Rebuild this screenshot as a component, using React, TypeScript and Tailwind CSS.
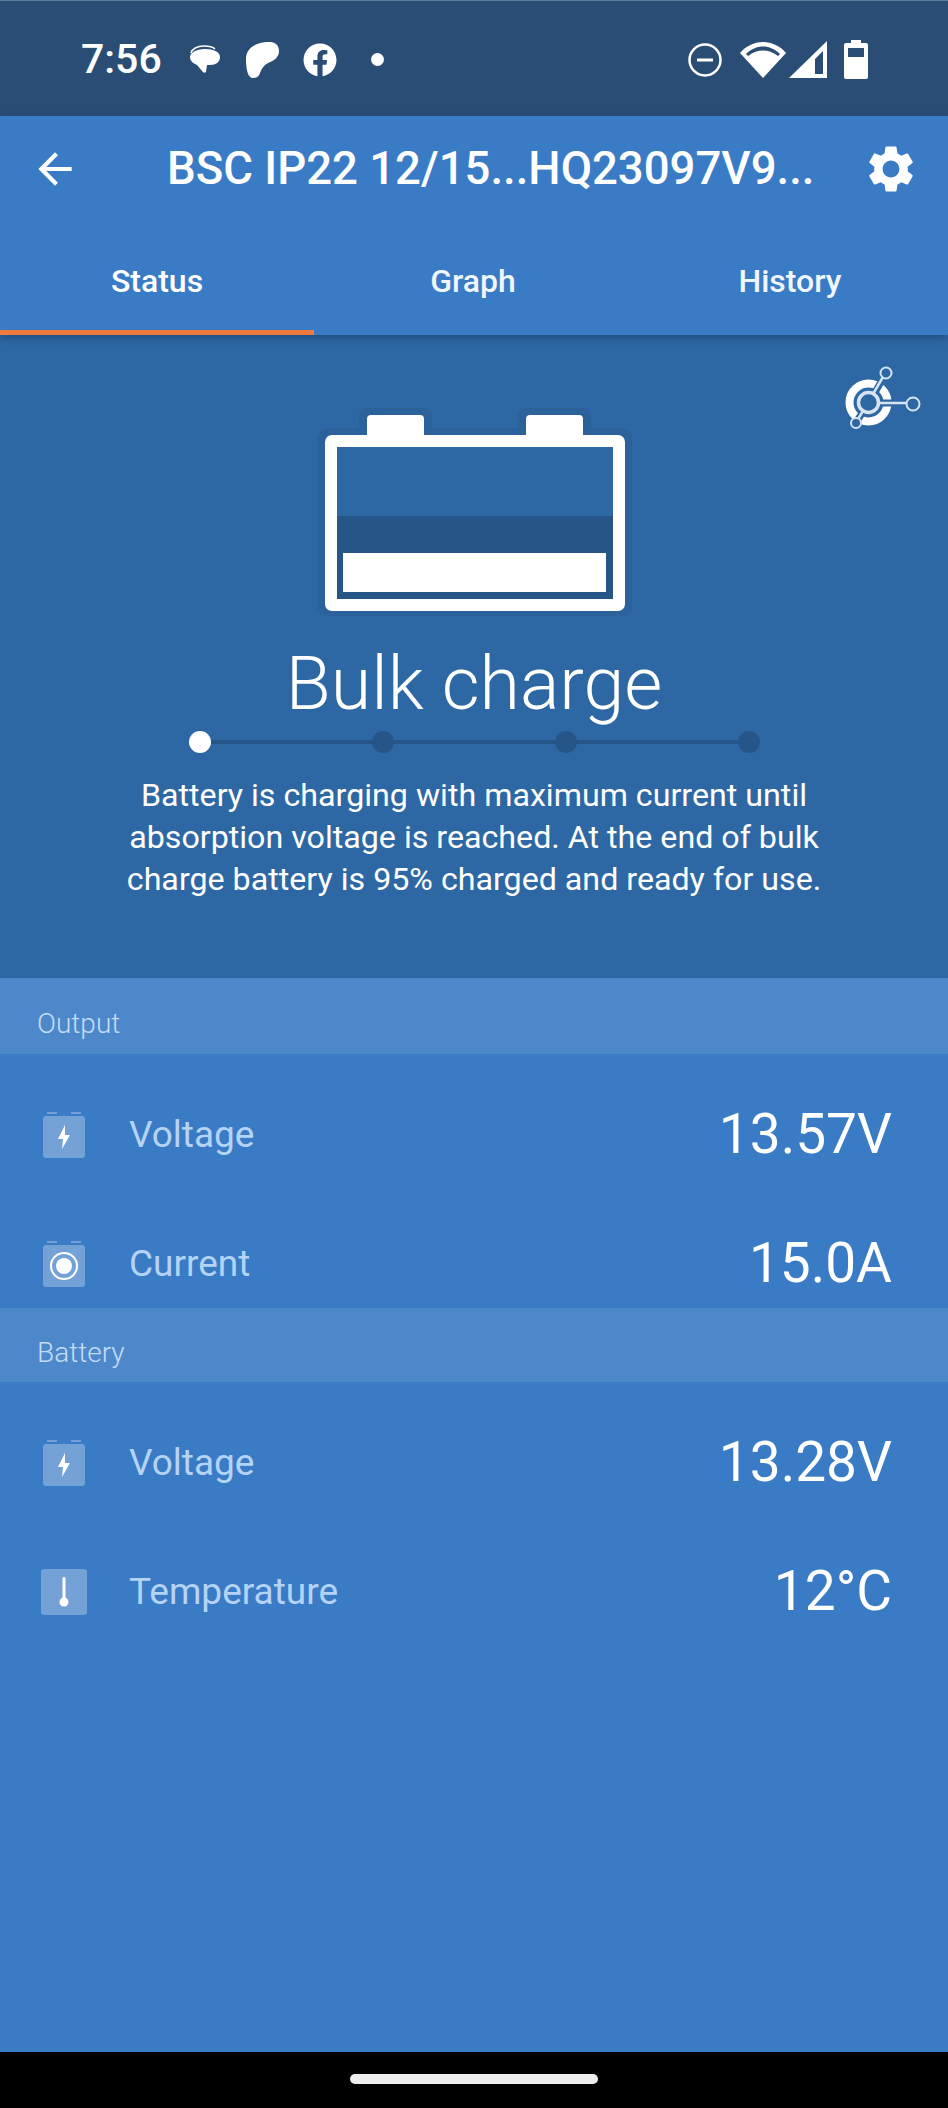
import { MdArrowBack, MdSettings } from 'react-icons/md'
import { FaFacebook } from 'react-icons/fa'

const font = { fontFamily: 'Roboto, sans-serif' }

function Bubble() {
  return (
    <svg width="34" height="32" viewBox="0 0 34 32" className="text-white">
      <path d="M3 9c1-4 6-7 13-7 5 0 9 1 11 3" fill="none" stroke="currentColor" strokeWidth="1.5" />
      <path d="M2 13c0-4 6-8 15-8s15 3 15 8c0 5-4 8-10 8-1 0-2 0-3 0l-1 7c-1 1-2 1-3 0l-6-7c-4-2-7-4-7-8z" fill="currentColor" />
    </svg>
  )
}

function Blob() {
  return (
    <svg width="34" height="36" viewBox="0 0 34 36" className="text-white">
      <path d="M1 17C1 7 9 1 21 0c9-1 13 3 13 9 0 7-6 10-11 12-4 2-6 5-8 10-1 3-3 5-7 5-5 0-7-8-7-19z" fill="currentColor" />
    </svg>
  )
}

function Dnd() {
  return (
    <svg width="34" height="34" viewBox="0 0 34 34">
      <circle cx="17" cy="17" r="15.5" fill="none" stroke="white" strokeWidth="2.5" />
      <rect x="9" y="15.5" width="16" height="3" fill="white" />
    </svg>
  )
}

function Wifi() {
  return (
    <svg width="46" height="38" viewBox="0 0 46 38">
      <path d="M0 12C6 5 14 1 23 1s17 4 23 11L23 37z" fill="white" />
      <path d="M6 13C11 8 17 5.500 23 5.500S35 8 40 13l-2 2C33 11 28 9.500 23 9.500S13 11 8 15z" fill="#2a4d76" />
    </svg>
  )
}

function Signal() {
  return (
    <svg width="38" height="37" viewBox="0 0 38 37">
      <path d="M0 37L38 0v37z" fill="white" />
      <path d="M26 18L34 10v23H26z" fill="#2a4d76" />
    </svg>
  )
}

function PhoneBattery() {
  return (
    <svg width="24" height="39" viewBox="0 0 24 39">
      <path d="M7 0h10v3h5a2 2 0 0 1 2 2v32a2 2 0 0 1-2 2H2a2 2 0 0 1-2-2V5a2 2 0 0 1 2-2h5z" fill="white" />
      <rect x="4" y="8" width="16" height="9" fill="#2a4d76" />
    </svg>
  )
}

function NetworkIcon() {
  return (
    <svg width="76" height="68" viewBox="0 0 76 68" className="absolute right-[27px] top-[31px]">
      <g transform="translate(-845 -367)">
        <circle cx="868.500" cy="403.500" r="19" fill="none" stroke="white" strokeWidth="8" />
        <path d="M870 402l15-26M870 404h38M866 408l-9 14" stroke="#2e68a4" strokeWidth="7" fill="none" />
        <circle cx="868.500" cy="403.500" r="10" fill="#2e68a4" stroke="#d5e3f2" strokeWidth="3.500" />
        <path d="M873 395l10-17M879 404h27M863 412l-5 8" stroke="#d5e3f2" strokeWidth="2.500" fill="none" />
        <circle cx="886" cy="374" r="5.500" fill="#2e68a4" stroke="#d5e3f2" strokeWidth="2" />
        <circle cx="913" cy="405" r="6.500" fill="#2e68a4" stroke="#d5e3f2" strokeWidth="2" />
        <circle cx="856" cy="424" r="5" fill="#2e68a4" stroke="#d5e3f2" strokeWidth="2" />
      </g>
    </svg>
  )
}

function BigBattery() {
  return (
    <svg width="316" height="212" viewBox="0 0 316 212" className="block">
      <rect x="1" y="24" width="316" height="188" rx="12" fill="#2b629c" />
      <rect x="43" y="4" width="73" height="40" rx="8" fill="#2b629c" />
      <rect x="202" y="4" width="73" height="40" rx="8" fill="#2b629c" />
      <rect x="51" y="11" width="57" height="30" rx="4" fill="white" />
      <rect x="210" y="11" width="57" height="30" rx="4" fill="white" />
      <rect x="9" y="31" width="300" height="176" rx="7" fill="white" />
      <rect x="21" y="43" width="276" height="152" fill="#2e68a4" />
      <rect x="21" y="112" width="276" height="83" fill="#265688" />
      <rect x="27" y="149" width="263" height="39" fill="white" />
    </svg>
  )
}

function Stepper() {
  return (
    <div className="relative mt-[5px] flex w-[571px] items-center justify-between">
      <div className="absolute left-[10px] right-[10px] top-[9px] h-[4px] bg-[#265688]" />
      <div className="relative h-[22px] w-[22px] rounded-full bg-white" />
      <div className="relative h-[22px] w-[22px] rounded-full bg-[#265688]" />
      <div className="relative h-[22px] w-[22px] rounded-full bg-[#265688]" />
      <div className="relative h-[22px] w-[22px] rounded-full bg-[#265688]" />
    </div>
  )
}

function PackIcon({ children }: { children: React.ReactNode }) {
  return (
    <div className="flex w-[42px] flex-col items-center">
      <div className="flex w-[34px] justify-between">
        <div className="h-[2px] w-[10px] bg-[#74a2d6]" />
        <div className="h-[2px] w-[10px] bg-[#74a2d6]" />
      </div>
      <div className="mt-[2px] flex h-[42px] w-[42px] items-center justify-center rounded-[3px] bg-[#74a2d6]">
        {children}
      </div>
    </div>
  )
}

function Bolt() {
  return (
    <svg width="14" height="24" viewBox="0 0 14 24">
      <path d="M8 0L1 14h5l-1 10 8-14H8z" fill="white" />
    </svg>
  )
}

function Target() {
  return (
    <div className="flex h-[28px] w-[28px] items-center justify-center rounded-full border-[2px] border-white">
      <div className="h-[16px] w-[16px] rounded-full bg-white" />
    </div>
  )
}

function Thermo() {
  return (
    <div className="-ml-[2px] flex h-[46px] w-[46px] items-center justify-center rounded-[3px] bg-[#74a2d6]">
      <svg width="10" height="30" viewBox="0 0 10 30">
        <rect x="3.500" y="0" width="3" height="24" rx="1.500" fill="white" />
        <circle cx="5" cy="25" r="4.500" fill="white" />
      </svg>
    </div>
  )
}

function Row({ icon, label, value }: { icon: React.ReactNode; label: string; value: string }) {
  return (
    <div className="flex h-[129px] items-center pl-[43px] pr-[56px]">
      <div className="flex w-[86px] justify-start">{icon}</div>
      <div className="flex-1 text-[37px] text-[#b4d3f5]">{label}</div>
      <div className="text-[55px] text-white">{value}</div>
    </div>
  )
}

function SectionHead({ title, tall }: { title: string; tall?: boolean }) {
  return (
    <div className={`flex items-center bg-[#4d88cb] pl-[37px] text-[28px] font-light text-[#c5dcf5] ${tall ? 'h-[76px] pt-[15px]' : 'h-[74px] pt-[15px]'}`}>
      {title}
    </div>
  )
}

export default function App() {
  return (
    <div className="flex h-[2108px] w-[948px] flex-col overflow-hidden bg-black" style={font}>
      <div className="flex h-[116px] items-center justify-between border-t border-[#5c7c9c] bg-[#2a4d76] pl-[81px] pr-[80px] pt-[2px]">
        <div className="flex items-center">
          <span className="w-[107px] text-[41px] font-medium text-white">7:56</span>
          <Bubble />
          <div className="ml-[23px]"><Blob /></div>
          <FaFacebook className="ml-[24px] text-[34px] text-white" />
          <div className="ml-[34px] h-[13px] w-[13px] rounded-full bg-white" />
        </div>
        <div className="flex items-center">
          <Dnd />
          <div className="ml-[18px]"><Wifi /></div>
          <div className="ml-[3px]"><Signal /></div>
          <div className="ml-[17px]"><PhoneBattery /></div>
        </div>
      </div>

      <div className="relative z-10 h-[219px] bg-[#3a7bc6] shadow-[0_3px_8px_rgba(20,50,90,0.5)]">
        <div className="flex h-[106px] items-center">
          <MdArrowBack className="ml-[30px] text-[50px] text-white" />
          <div className="ml-[87px] w-[696px] text-[45.5px] leading-none font-medium whitespace-nowrap text-white">
            BSC IP22 12/15...HQ23097V9...
          </div>
          <MdSettings className="text-[56px] text-white" />
        </div>
        <div className="flex h-[113px]">
          <div className="flex w-[314px] items-center justify-center border-b-[5px] border-[#ee7a3c] pt-[9px] text-[32px] font-medium text-white">
            Status
          </div>
          <div className="flex w-[318px] items-center justify-center pt-[4px] text-[32px] font-medium text-[#f0f6fc]">
            Graph
          </div>
          <div className="flex w-[316px] items-center justify-center pt-[4px] text-[32px] font-medium text-[#f0f6fc]">
            History
          </div>
        </div>
      </div>

      <div className="relative flex h-[643px] flex-col items-center bg-[#2e68a4] pt-[69px]">
        <NetworkIcon />
        <BigBattery />
        <div className="mt-[26px] text-[73.5px] leading-[84px] font-light text-white">Bulk charge</div>
        <Stepper />
        <div className="mt-[21px] w-[740px] text-center text-[32.2px] leading-[42px] text-white">
          Battery is charging with maximum current until absorption voltage is reached. At the end of bulk charge battery is 95% charged and ready for use.
        </div>
      </div>

      <SectionHead title="Output" tall />
      <div className="h-[254px] overflow-hidden bg-[#3a7bc6] pt-[16px]">
        <Row icon={<PackIcon><Bolt /></PackIcon>} label="Voltage" value="13.57V" />
        <Row icon={<PackIcon><Target /></PackIcon>} label="Current" value="15.0A" />
      </div>

      <SectionHead title="Battery" />
      <div className="h-[670px] bg-[#3a7bc6] pt-[16px]">
        <Row icon={<PackIcon><Bolt /></PackIcon>} label="Voltage" value="13.28V" />
        <Row icon={<Thermo />} label="Temperature" value="12°C" />
      </div>

      <div className="flex flex-1 items-center justify-center pb-[2px]">
        <div className="h-[10px] w-[248px] rounded-full bg-[#eeeeee]" />
      </div>
    </div>
  )
}
